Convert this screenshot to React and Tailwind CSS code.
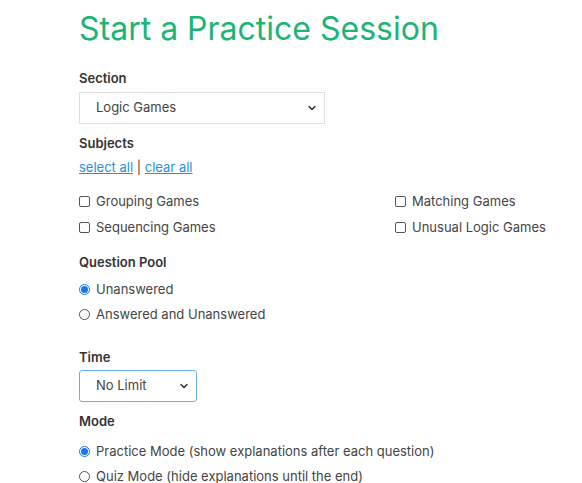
import { ChevronDown } from 'lucide-react'

const Label = ({ children, className = '' }) => (
  <div className={`text-[13px] font-semibold text-[#333] ${className}`}>{children}</div>
)

const Check = ({ label }) => (
  <label className="flex items-center gap-[6px] h-[26px] text-[13px] text-[#444]">
    <span className="w-[11px] h-[11px] border border-[#555] rounded-[2px] bg-white" />
    {label}
  </label>
)

const Radio = ({ label, checked }) => (
  <label className="flex items-center gap-[6px] h-[25px] text-[13px] text-[#444]">
    {checked ? (
      <span className="w-[11px] h-[11px] rounded-full border border-[#1a73e8] flex items-center justify-center">
        <span className="w-[7px] h-[7px] rounded-full bg-[#1a73e8]" />
      </span>
    ) : (
      <span className="w-[11px] h-[11px] rounded-full border border-[#555]" />
    )}
    {label}
  </label>
)

export default function App() {
  return (
    <div className="min-h-screen bg-white font-['Inter',sans-serif] pl-[79px] pt-[10px]">
      <h1 className="text-[32px] leading-[38px] text-[#20b474] font-normal">Start a Practice Session</h1>

      <Label className="mt-[21px]">Section</Label>
      <div className="mt-[3px] w-[246px] h-[32px] border border-[#ddd] flex items-center justify-between pl-[16px] pr-[6px] text-[13px] text-[#444]">
        Logic Games
        <ChevronDown className="w-[12px] h-[12px] text-[#333]" strokeWidth={3} />
      </div>

      <Label className="mt-[10px]">Subjects</Label>
      <div className="mt-[5px] text-[13px] text-[#444]">
        <a className="text-[#2a8fd6] underline">select all</a> | <a className="text-[#2a8fd6] underline">clear all</a>
      </div>

      <div className="mt-[11px] grid grid-cols-[316px_1fr]">
        <Check label="Grouping Games" />
        <Check label="Matching Games" />
        <Check label="Sequencing Games" />
        <Check label="Unusual Logic Games" />
      </div>

      <Label className="mt-[12px]">Question Pool</Label>
      <div className="mt-[5px]">
        <Radio label="Unanswered" checked />
        <Radio label="Answered and Unanswered" />
      </div>

      <Label className="mt-[21px]">Time</Label>
      <div className="mt-[2px] w-[118px] h-[32px] border border-[#66afe9] rounded-[3px] flex items-center justify-between pl-[16px] pr-[6px] text-[13px] text-[#444]">
        No Limit
        <ChevronDown className="w-[12px] h-[12px] text-[#333]" strokeWidth={3} />
      </div>

      <Label className="mt-[10px]">Mode</Label>
      <div className="mt-[8px]">
        <Radio label="Practice Mode (show explanations after each question)" checked />
        <Radio label="Quiz Mode (hide explanations until the end)" />
      </div>
    </div>
  )
}
